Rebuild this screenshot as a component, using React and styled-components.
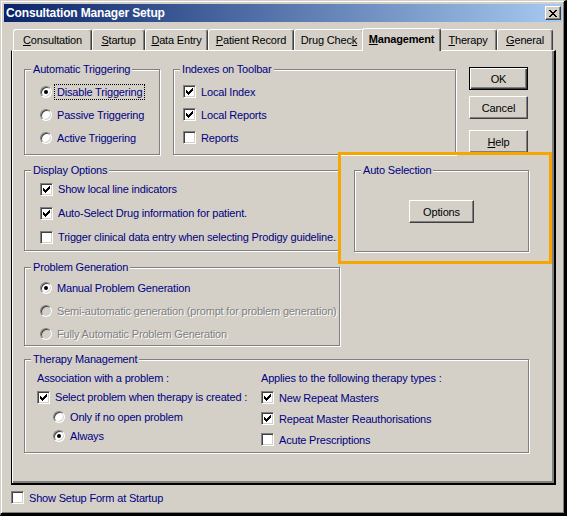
import React from 'react';
import styled, { createGlobalStyle, css } from 'styled-components';

const GlobalStyle = createGlobalStyle`
  html, body { margin: 0; padding: 0; background: #d4d0c8; }
  body {
    font-family: "Liberation Sans", Arial, sans-serif;
    font-size: 11px;
    letter-spacing: -0.18px;
  }
  * { box-sizing: border-box; }
`;

const Window = styled.div`
  width: 567px;
  height: 516px;
  background: #d4d0c8;
  border-style: solid;
  border-width: 1px 3px 3px 1px;
  border-color: #d4d0c8 #000 #000 #d4d0c8;
  box-shadow: inset 1px 1px 0 #fff, inset -1px -1px 0 #808080;
  padding: 3px 2px 0 3px;
  display: flex;
  flex-direction: column;
`;

const TitleBar = styled.div`
  height: 18px;
  display: flex;
  align-items: center;
  padding: 0 1px 0 2px;
  background: linear-gradient(to right, #0a246a, #a6caf0);
`;

const TitleText = styled.div`
  flex: 1;
  color: #fff;
  font-weight: bold;
  font-size: 12px;
  letter-spacing: -0.15px;
`;

const CloseButton = styled.div`
  width: 16px;
  height: 14px;
  background: #d4d0c8;
  border: 1px solid;
  border-color: #fff #404040 #404040 #fff;
  box-shadow: inset -1px -1px 0 #808080;
  display: flex;
  align-items: center;
  justify-content: center;
  padding-right: 1px;
`;

const TabStrip = styled.div`
  margin-top: 6px;
  height: 22px;
  padding-left: 9px;
  display: flex;
  align-items: flex-end;
`;

const Tab = styled.div`
  width: ${p => p.$w}px;
  height: 21px;
  flex-shrink: 0;
  background: #d4d0c8;
  border-top: 1px solid #fff;
  border-left: 1px solid #fff;
  border-right: 1px solid #404040;
  box-shadow: inset -1px 0 0 #808080;
  border-radius: 3px 3px 0 0;
  display: flex;
  align-items: center;
  justify-content: center;
  color: #000;
  white-space: nowrap;
  ${p => p.$selected && css`
    height: 23px;
    margin: 0 -2px -1px -2px;
    width: ${p.$w + 4}px;
    font-weight: bold;
    position: relative;
    z-index: 1;
    padding-bottom: 2px;
  `}
`;

const Panel = styled.div`
  position: relative;
  margin-left: 7px;
  width: 545px;
  height: 435px;
  border-style: solid;
  border-width: 1px 2px 2px 1px;
  border-color: #fff #000 #000 #000;
  box-shadow: inset 1px 0 0 #fff, inset -2px -2px 0 #808080;
  padding: 12px 0 0 12px;
  display: flex;
  flex-direction: column;
`;

const RowA = styled.div`
  display: flex;
  gap: 13px;
  align-items: flex-start;
`;

const RowB = styled.div`
  margin-top: 9px;
  display: flex;
  gap: 14px;
  align-items: flex-start;
`;

const Column = styled.div`
  display: flex;
  flex-direction: column;
  gap: ${p => p.$gap || 0}px;
  width: ${p => (p.$w ? `${p.$w}px` : 'auto')};
  padding: ${p => p.$pad || '0'};
`;

const Group = styled.fieldset`
  margin: ${p => p.$mt || 0}px 0 0 0;
  padding: 0;
  min-width: 0;
  width: ${p => p.$w}px;
  height: ${p => p.$h}px;
  border: 1px solid #808080;
  box-shadow: inset 1px 1px 0 #fff, 1px 1px 0 #fff;
`;

const GroupBody = styled.div`
  display: flex;
  flex-direction: ${p => p.$dir || 'column'};
  padding: ${p => p.$pad || '0'};
`;

const Legend = styled.legend`
  margin-left: 6px;
  padding: 0 2px;
  height: 13px;
  line-height: 13px;
  color: #000080;
  background: #d4d0c8;
`;

const Option = styled.div`
  height: ${p => p.$h || 23}px;
  display: flex;
  align-items: center;
  gap: 5px;
  padding-left: ${p => p.$indent || 0}px;
  color: ${p => (p.$disabled ? '#808080' : '#000080')};
  text-shadow: ${p => (p.$disabled ? '1px 1px 0 #fff' : 'none')};
  white-space: nowrap;
`;

const Caption = styled.div`
  height: 18px;
  display: flex;
  align-items: center;
  color: #000080;
  white-space: nowrap;
`;

const Focus = styled.span`
  outline: 1px dotted #000;
  outline-offset: 1px;
  padding: 0 1px;
  margin-left: -1px;
`;

const Box = styled.span`
  width: 13px;
  height: 13px;
  flex-shrink: 0;
  border: 1px solid;
  border-color: #808080 #fff #fff #808080;
  box-shadow: inset 1px 1px 0 #404040, inset -1px -1px 0 #d4d0c8;
  background: #fff;
  display: flex;
  align-items: center;
  justify-content: center;
`;

const RadioDot = styled.span`
  width: 12px;
  height: 12px;
  flex-shrink: 0;
  border-radius: 50%;
  border: 1px solid;
  border-color: #808080 #fff #fff #808080;
  box-shadow: inset 1px 1px 0 #404040, inset -1px -1px 0 #d4d0c8;
  background: ${p => (p.$disabled ? '#d4d0c8' : '#fff')};
  display: flex;
  align-items: center;
  justify-content: center;
  &::after {
    content: '';
    width: 4px;
    height: 4px;
    border-radius: 50%;
    background: #000;
    display: ${p => (p.$checked ? 'block' : 'none')};
  }
`;

const Button = styled.button`
  width: ${p => p.$w || 59}px;
  height: 23px;
  margin: ${p => p.$mt || 0}px 0 0 0;
  padding: 0;
  font-family: "Liberation Sans", Arial, sans-serif;
  font-size: 11px;
  letter-spacing: -0.15px;
  color: #000;
  background: #d4d0c8;
  border: 1px solid;
  border-color: #fff #404040 #404040 #fff;
  box-shadow: inset -1px -1px 0 #808080;
  ${p => p.$default && css`
    border-color: #000;
    box-shadow: inset 1px 1px 0 #fff, inset -1px -1px 0 #404040, inset -2px -2px 0 #808080;
  `}
`;

const CenterArea = styled.div`
  display: flex;
  justify-content: center;
  padding-top: 23px;
`;

const Highlight = styled.div`
  position: absolute;
  left: 326px;
  top: 101px;
  width: 214px;
  height: 112px;
  border: 3px solid #f7a600;
  pointer-events: none;
`;

const Footer = styled.div`
  margin: 6px 0 0 7px;
`;

const Check = () => (
  <svg width="7" height="7" viewBox="0 0 7 7" shapeRendering="crispEdges">
    <path d="M6 0h1v3h-1zM5 1h1v3h-1zM4 2h1v3h-1zM3 3h1v3h-1zM2 4h1v3h-1zM1 3h1v3h-1zM0 2h1v3h-1z" fill="#000" />
  </svg>
);

const CheckBox = ({ checked }) => <Box>{checked && <Check />}</Box>;

const CloseGlyph = () => (
  <svg width="8" height="7" viewBox="0 0 8 7" shapeRendering="crispEdges">
    <path
      d="M0 0h2v1H0zM6 0h2v1H6zM1 1h2v1H1zM5 1h2v1H5zM2 2h4v1H2zM3 3h2v1H3zM2 4h4v1H2zM1 5h2v1H1zM5 5h2v1H5zM0 6h2v1H0zM6 6h2v1H6z"
      fill="#000"
    />
  </svg>
);

const Key = ({ text, at }) =>
  at === undefined ? (
    text
  ) : (
    <>
      {text.slice(0, at)}
      <u>{text[at]}</u>
      {text.slice(at + 1)}
    </>
  );

const tabs = [
  { label: 'Consultation', at: 0, w: 79 },
  { label: 'Startup', at: 0, w: 53 },
  { label: 'Data Entry', at: 0, w: 63 },
  { label: 'Patient Record', at: 0, w: 86 },
  { label: 'Drug Check', at: 9, w: 70 },
  { label: 'Management', at: 0, w: 75, selected: true },
  { label: 'Therapy', at: 0, w: 58 },
  { label: 'General', at: 0, w: 56 },
];

export default function App() {
  return (
    <>
      <GlobalStyle />
      <Window>
        <TitleBar>
          <TitleText>Consultation Manager Setup</TitleText>
          <CloseButton>
            <CloseGlyph />
          </CloseButton>
        </TitleBar>

        <TabStrip>
          {tabs.map(t => (
            <Tab key={t.label} $w={t.w} $selected={t.selected}>
              <Key text={t.label} at={t.at} />
            </Tab>
          ))}
        </TabStrip>

        <Panel>
          <RowA>
            <Group $w={136} $h={92}>
              <Legend>Automatic Triggering</Legend>
              <GroupBody $pad="4px 0 0 15px">
                <Option>
                  <RadioDot $checked />
                  <Focus>Disable Triggering</Focus>
                </Option>
                <Option>
                  <RadioDot />
                  Passive Triggering
                </Option>
                <Option>
                  <RadioDot />
                  Active Triggering
                </Option>
              </GroupBody>
            </Group>

            <Group $w={283} $h={92}>
              <Legend>Indexes on Toolbar</Legend>
              <GroupBody $pad="4px 0 0 9px">
                <Option>
                  <CheckBox checked />
                  Local Index
                </Option>
                <Option>
                  <CheckBox checked />
                  Local Reports
                </Option>
                <Option>
                  <CheckBox />
                  Reports
                </Option>
              </GroupBody>
            </Group>

            <Column $pad="4px 0 0 0">
              <Button $default>OK</Button>
              <Button $mt={6}>Cancel</Button>
              <Button $mt={11}>
                <u>H</u>elp
              </Button>
            </Column>
          </RowA>

          <RowB>
            <Column $w={316} $gap={10}>
              <Group $w={316} $h={87}>
                <Legend>Display Options</Legend>
                <GroupBody $pad="0 0 0 15px">
                  <Option $h={24}>
                    <CheckBox checked />
                    Show local line indicators
                  </Option>
                  <Option $h={24}>
                    <CheckBox checked />
                    Auto-Select Drug information for patient.
                  </Option>
                  <Option $h={24}>
                    <CheckBox />
                    Trigger clinical data entry when selecting Prodigy guideline.
                  </Option>
                </GroupBody>
              </Group>

              <Group $w={316} $h={85}>
                <Legend>Problem Generation</Legend>
                <GroupBody $pad="2px 0 0 15px">
                  <Option>
                    <RadioDot $checked />
                    Manual Problem Generation
                  </Option>
                  <Option $disabled>
                    <RadioDot $disabled />
                    Semi-automatic generation (prompt for problem generation)
                  </Option>
                  <Option $disabled>
                    <RadioDot $disabled />
                    Fully Automatic Problem Generation
                  </Option>
                </GroupBody>
              </Group>
            </Column>

            <Group $w={175} $h={88}>
              <Legend>Auto Selection</Legend>
              <CenterArea>
                <Button $w={65}>Options</Button>
              </CenterArea>
            </Group>
          </RowB>

          <Group $w={505} $h={100} $mt={7}>
            <Legend>Therapy Management</Legend>
            <GroupBody $dir="row" $pad="3px 0 0 12px">
              <Column $w={224}>
                <Caption>Association with a problem :</Caption>
                <Option $h={20}>
                  <CheckBox checked />
                  Select problem when therapy is created :
                </Option>
                <Option $h={19} $indent={16}>
                  <RadioDot />
                  Only if no open problem
                </Option>
                <Option $h={19} $indent={16}>
                  <RadioDot $checked />
                  Always
                </Option>
              </Column>
              <Column>
                <Caption>Applies to the following therapy types :</Caption>
                <Option $h={21}>
                  <CheckBox checked />
                  New Repeat Masters
                </Option>
                <Option $h={21}>
                  <CheckBox checked />
                  Repeat Master Reauthorisations
                </Option>
                <Option $h={21}>
                  <CheckBox />
                  Acute Prescriptions
                </Option>
              </Column>
            </GroupBody>
          </Group>

          <Highlight />
        </Panel>

        <Footer>
          <Option $h={13}>
            <CheckBox />
            Show Setup Form at Startup
          </Option>
        </Footer>
      </Window>
    </>
  );
}
